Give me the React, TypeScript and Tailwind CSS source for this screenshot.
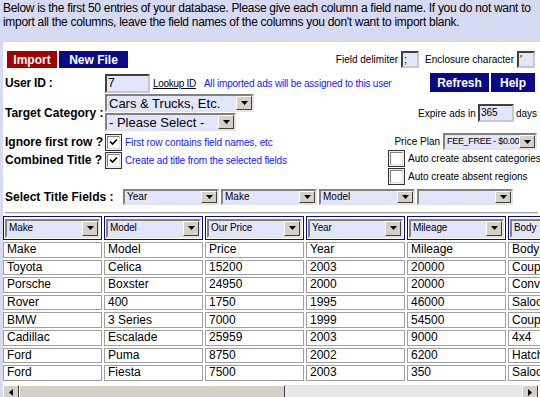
import React from "react";

const rows = [
  ["Make", "Model", "Price", "Year", "Mileage", "Body"],
  ["Toyota", "Celica", "15200", "2003", "20000", "Coupe"],
  ["Porsche", "Boxster", "24950", "2000", "20000", "Convertible"],
  ["Rover", "400", "1750", "1995", "46000", "Saloon"],
  ["BMW", "3 Series", "7000", "1999", "54500", "Coupe"],
  ["Cadillac", "Escalade", "25959", "2003", "9000", "4x4"],
  ["Ford", "Puma", "8750", "2002", "6200", "Hatchback"],
  ["Ford", "Fiesta", "7500", "2003", "350", "Saloon"],
];

const headers = ["Make", "Model", "Our Price", "Year", "Mileage", "Body"];

function Arrow({ dir = "down" }: { dir?: "down" | "left" | "right" }) {
  return (
    <span className="flex h-full w-[16px] shrink-0 items-center justify-center border border-t-white border-l-white border-b-[#404040] border-r-[#404040] bg-[#d4d0c8]">
      {dir === "down" && (
        <svg width="7" height="4" viewBox="0 0 7 4">
          <path d="M0 0h7L3.5 4z" fill="#000" />
        </svg>
      )}
      {dir === "left" && (
        <svg width="4" height="7" viewBox="0 0 4 7">
          <path d="M4 0v7L0 3.5z" fill="#000" />
        </svg>
      )}
      {dir === "right" && (
        <svg width="4" height="7" viewBox="0 0 4 7">
          <path d="M0 0v7l4-3.5z" fill="#000" />
        </svg>
      )}
    </span>
  );
}

function Sel({ text, className, textClass = "text-[13px]" }: { text: string; className: string; textClass?: string }) {
  return (
    <div className={`flex shrink-0 items-stretch border-2 border-t-[#808080] border-l-[#808080] border-b-[#e4e4e4] border-r-[#e4e4e4] bg-[#e3e5fb] ${className}`}>
      <span className={`flex flex-1 items-center overflow-hidden whitespace-nowrap pl-[2px] leading-none ${textClass}`}>{text}</span>
      <Arrow />
    </div>
  );
}

function Check({ on }: { on?: boolean }) {
  return (
    <span className="flex h-[17px] w-[17px] shrink-0 items-center justify-center border border-[#333] bg-[#eef0fb]">
      <span className="flex h-[13px] w-[13px] items-center justify-center border border-t-[#808080] border-l-[#808080] border-b-[#e4e4e4] border-r-[#e4e4e4] bg-white">
        {on && (
          <svg width="9" height="9" viewBox="0 0 9 9">
            <path d="M1 3.5l2.5 2.5L8 1.5" stroke="#000" strokeWidth="1.6" fill="none" />
          </svg>
        )}
      </span>
    </span>
  );
}

function Field({ value, className }: { value: string; className: string }) {
  return (
    <span className={`flex shrink-0 items-center border-2 border-t-[#404040] border-l-[#404040] border-b-[#c8c8c8] border-r-[#c8c8c8] bg-[#e3e5fb] pl-[1px] leading-none ${className}`}>
      {value}
    </span>
  );
}

export default function App() {
  return (
    <div className="h-[397px] w-[540px] overflow-hidden bg-[#d7daf3] font-['Liberation_Sans',Arial,sans-serif] text-black">
      <p className="h-[42px] px-[3px] pt-[1px] text-[12px] leading-[14px] tracking-[-0.3px]">
        Below is the first 50 entries of your database. Please give each column a field name. If you do not want to
        import all the columns, leave the field names of the columns you don't want to import blank.
      </p>

      <div className="ml-[3px] bg-white pt-[9px]">
        {/* toolbar */}
        <div className="flex h-[17px] items-center justify-between pl-[4px] pr-[5px]">
          <div className="flex h-full gap-[2px]">
            <span className="flex w-[50px] items-center justify-center bg-[#a30000] text-[12px] font-bold text-white">Import</span>
            <span className="flex w-[69px] items-center justify-center bg-[#0a0a87] text-[12px] font-bold text-white">New File</span>
          </div>
          <div className="flex items-center whitespace-nowrap text-[10px]">
            <span>Field delimiter</span>
            <Field value=";" className="ml-[3px] h-[17px] w-[18px] text-[11px]" />
            <span className="ml-[6px]">Enclosure character</span>
            <Field value="'" className="ml-[3px] h-[17px] w-[18px] text-[11px]" />
          </div>
        </div>

        {/* main form */}
        <div className="mt-[5px] flex">
          <div className="flex w-[385px] shrink-0 flex-col whitespace-nowrap">
            <div className="flex h-[20px] items-center">
              <span className="w-[102px] shrink-0 pl-[2px] text-[12px] font-bold tracking-[-0.2px]">User ID :</span>
              <Field value="7" className="h-[19px] w-[45px] text-[12px]" />
              <span className="ml-[3px] text-[10px] tracking-[-0.3px] underline">Lookup ID</span>
              <span className="ml-[8px] text-[10px] tracking-[-0.2px] text-[#1a1aff]">All imported ads will be assigned to this user</span>
            </div>
            <div className="flex h-[39px] items-center">
              <span className="w-[102px] shrink-0 pl-[2px] text-[12px] font-bold">Target Category :</span>
              <div className="flex flex-col gap-[1px]">
                <Sel text="Cars & Trucks, Etc." className="h-[18px] w-[149px]" />
                <Sel text="- Please Select -" className="h-[18px] w-[131px]" />
              </div>
            </div>
            <div className="mt-[1px] flex h-[18px] items-center">
              <span className="w-[102px] shrink-0 pl-[2px] text-[12px] font-bold">Ignore first row ?</span>
              <Check on />
              <span className="ml-[3px] text-[10px] tracking-[-0.1px] text-[#1a1aff]">First row contains field names, etc</span>
            </div>
            <div className="flex h-[18px] items-center">
              <span className="w-[102px] shrink-0 pl-[2px] text-[12px] font-bold">Combined Title ?</span>
              <Check on />
              <span className="ml-[3px] text-[10px] tracking-[-0.15px] text-[#1a1aff]">Create ad title from the selected fields</span>
            </div>
          </div>

          <div className="flex w-[152px] shrink-0 flex-col whitespace-nowrap text-[10px]">
            <div className="flex h-[19px] justify-end gap-[2px] pr-[5px]">
              <span className="flex w-[59px] items-center justify-center bg-[#0a0a87] text-[12px] font-bold text-white">Refresh</span>
              <span className="flex w-[44px] items-center justify-center bg-[#0a0a87] text-[12px] font-bold text-white">Help</span>
            </div>
            <div className="mt-[12px] flex h-[18px] items-center justify-end pr-[3px]">
              <span>Expire ads in</span>
              <Field value="365" className="ml-[2px] h-[18px] w-[36px] text-[10px]" />
              <span className="ml-[2px]">days</span>
            </div>
            <div className="mt-[11px] flex h-[17px] items-center justify-end pr-[3px]">
              <span>Price Plan</span>
              <Sel text="FEE_FREE - $0.00" className="ml-[3px] h-[17px] w-[94px]" textClass="text-[9px] tracking-[-0.3px]" />
            </div>
            <div className="flex h-[17px] items-center">
              <Check />
              <span className="ml-[3px]">Auto create absent categories</span>
            </div>
            <div className="mt-[1px] flex h-[17px] items-center">
              <Check />
              <span className="ml-[3px]">Auto create absent regions</span>
            </div>
          </div>
        </div>

        <div className="mt-[4px] flex h-[16px] items-center">
          <span className="w-[120px] pl-[2px] text-[12px] font-bold">Select Title Fields :</span>
          <div className="flex gap-[2px]">
            <Sel text="Year" className="h-[16px] w-[96px]" textClass="text-[10px]" />
            <Sel text="Make" className="h-[16px] w-[96px]" textClass="text-[10px]" />
            <Sel text="Model" className="h-[16px] w-[96px]" textClass="text-[10px]" />
            <Sel text="" className="h-[16px] w-[96px]" textClass="text-[10px]" />
          </div>
        </div>

        <div className="mx-[2px] mt-[7px] border-t border-b border-t-[#a0a0a0] border-b-[#e0e0e0]" />

        <div className="w-[537px] overflow-hidden">
          <table className="-ml-[2px] border-separate border-spacing-[2px] text-[12px]">
            <thead>
              <tr>
                {headers.map((h) => (
                  <td key={h} className="h-[24px] w-[99px] min-w-[99px] border border-[#0a0a87] p-[1px]">
                    <Sel text={h} className="h-[19px] w-full" textClass="text-[10px] tracking-[-0.1px]" />
                  </td>
                ))}
              </tr>
            </thead>
            <tbody>
              {rows.map((r, i) => (
                <tr key={i}>
                  {r.map((c, j) => (
                    <td key={j} className="h-[15.6px] w-[99px] min-w-[99px] border border-[#a0a0a0] px-[3px] leading-[13px] whitespace-nowrap">
                      {c}
                    </td>
                  ))}
                </tr>
              ))}
            </tbody>
          </table>
        </div>

        <div className="mt-[2px] flex h-[16px] w-[535px]">
          <Arrow dir="left" />
          <span className="w-[266px] border border-t-white border-l-white border-b-[#404040] border-r-[#404040] bg-[#d4d0c8]" />
          <span className="flex-1 bg-[#e8e8e8]" />
          <Arrow dir="right" />
        </div>
      </div>
    </div>
  );
}
